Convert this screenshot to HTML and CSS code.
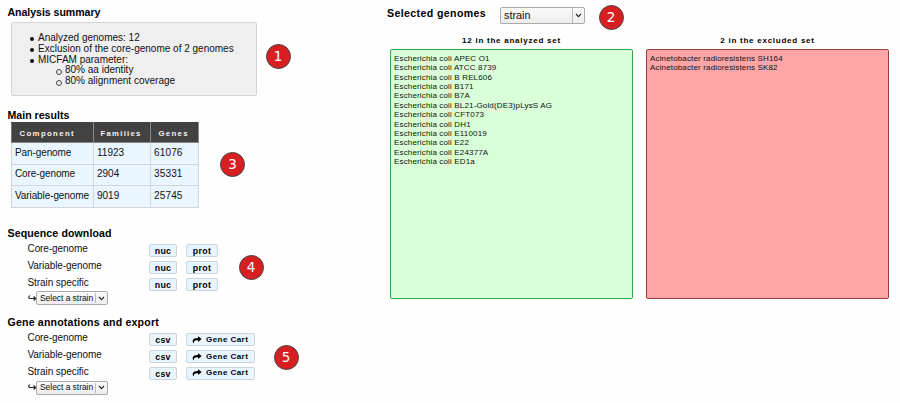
FILE: index.html
```html
<!DOCTYPE html>
<html lang="en">
<head>
<meta charset="utf-8">
<title>Pan-genome analysis</title>
<link rel="stylesheet" href="styles.css">
</head>
<body>
<svg class="defs" aria-hidden="true"><defs>
<symbol id="share" viewBox="0 0 10 8"><path d="M6 0.3 9.7 3.1 6 6V4.3C3.4 4 1.8 4.4 1.6 7.6 0 5.6 0 2 6 2z"/></symbol>
<symbol id="chevron" viewBox="0 0 7 5"><path d="M1 1 3.5 3.6 6 1"/></symbol>
<symbol id="hook" viewBox="0 0 9 7"><path d="M2.2 0.8C0.2 0.8 0.2 3.5 2.2 3.5H7.6M5.6 1.5 7.8 3.5 5.6 5.5"/></symbol>
</defs></svg>
<main class="page">
  <div class="left">
    <section class="summary">
      <h2 class="title t-summary">Analysis summary</h2>
      <div class="panel">
        <ul class="list">
          <li>Analyzed genomes: 12</li>
          <li>Exclusion of the core-genome of 2 genomes</li>
          <li>MICFAM parameter:
            <ul class="sublist"><li>80% aa identity</li><li>80% alignment coverage</li></ul>
          </li>
        </ul>
      </div>
      <span class="badge b1">1</span>
    </section>
    <section class="results">
      <h2 class="title t-results">Main results</h2>
      <table class="table">
        <thead><tr><th class="c1">Component</th><th class="c2">Families</th><th class="c3">Genes</th></tr></thead>
        <tbody>
          <tr><td>Pan-genome</td><td>11923</td><td>61076</td></tr>
          <tr><td>Core-genome</td><td>2904</td><td>35331</td></tr>
          <tr><td>Variable-genome</td><td>9019</td><td>25745</td></tr>
        </tbody>
      </table>
      <span class="badge b3">3</span>
    </section>
    <section class="download">
      <h2 class="title t-download">Sequence download</h2>
      <div class="row"><span class="label">Core-genome</span><a class="btn small">nuc</a><a class="btn prot">prot</a></div>
      <div class="row"><span class="label">Variable-genome</span><a class="btn small">nuc</a><a class="btn prot">prot</a></div>
      <div class="row"><span class="label">Strain specific</span><a class="btn small">nuc</a><a class="btn prot">prot</a></div>
      <div class="pick"><svg class="hook"><use href="#hook"/></svg><div class="select mini"><span class="value">Select a strain</span><span class="arrow"><svg class="chev"><use href="#chevron"/></svg></span></div></div>
      <span class="badge b4">4</span>
    </section>
    <section class="export">
      <h2 class="title t-export">Gene annotations and export</h2>
      <div class="row"><span class="label">Core-genome</span><a class="btn small">csv</a><a class="btn cart"><svg class="share"><use href="#share"/></svg>Gene Cart</a></div>
      <div class="row"><span class="label">Variable-genome</span><a class="btn small">csv</a><a class="btn cart"><svg class="share"><use href="#share"/></svg>Gene Cart</a></div>
      <div class="row"><span class="label">Strain specific</span><a class="btn small">csv</a><a class="btn cart"><svg class="share"><use href="#share"/></svg>Gene Cart</a></div>
      <div class="pick"><svg class="hook"><use href="#hook"/></svg><div class="select mini"><span class="value">Select a strain</span><span class="arrow"><svg class="chev"><use href="#chevron"/></svg></span></div></div>
      <span class="badge b5">5</span>
    </section>
  </div>
  <section class="right">
    <div class="bar">
      <h2 class="title t-selected">Selected genomes</h2>
      <div class="select big"><span class="value">strain</span><span class="arrow"><svg class="chev"><use href="#chevron"/></svg></span></div>
      <span class="badge b2">2</span>
    </div>
    <div class="sets">
      <div class="set">
        <h3 class="caption">12 in the analyzed set</h3>
        <div class="box analyzed">
          <div>Escherichia coli APEC O1</div><div>Escherichia coli ATCC 8739</div><div>Escherichia coli B REL606</div><div>Escherichia coli B171</div><div>Escherichia coli B7A</div><div>Escherichia coli BL21-Gold(DE3)pLysS AG</div><div>Escherichia coli CFT073</div><div>Escherichia coli DH1</div><div>Escherichia coli E110019</div><div>Escherichia coli E22</div><div>Escherichia coli E24377A</div><div>Escherichia coli ED1a</div>
        </div>
      </div>
      <div class="set">
        <h3 class="caption">2 in the excluded set</h3>
        <div class="box excluded"><div>Acinetobacter radioresistens SH164</div><div>Acinetobacter radioresistens SK82</div></div>
      </div>
    </div>
  </section>
</main>
</body>
</html>
```
FILE: styles.css
```css
* { box-sizing: border-box; }
body { margin: 0; background: #fefefe; color: #111; font: 10px/10.8px "Liberation Sans", Arial, sans-serif; }
.defs { position: absolute; width: 0; height: 0; }
.page { display: grid; grid-template-columns: 379px 1fr; height: 403px; overflow: hidden; white-space: nowrap; }
.left { padding: 6px 0 0 7.5px; }
.left section { position: relative; }
.title { margin: 0; font-size: 10.6px; line-height: 13px; font-weight: bold; color: #000; }
.t-summary { letter-spacing: -0.05px; }
.t-results { letter-spacing: 0; }
.t-download { letter-spacing: 0.1px; }
.t-export { letter-spacing: 0.18px; }
.summary { height: 103px; }
.panel { width: 246px; height: 74px; margin: 3px 0 0 3.5px; padding: 10px 0 0; background: #efefef; border: 1px solid #d4d4d4; border-radius: 2px; }
.list, .sublist { margin: 0; padding-left: 26px; }
.list li { position: relative; list-style: none; }
.list li::before { content: ""; position: absolute; left: -8px; top: 4px; width: 4px; height: 4px; border-radius: 50%; background: #111; }
.list .sublist li::before { background: none; border: 1px solid #444; left: -9px; top: 4px; }
.sublist { padding-left: 27px; }
.results { height: 118px; }
.table { margin-left: 3px; border-collapse: collapse; table-layout: fixed; width: 187px; background: #e9f5ff; }
.c1 { width: 82px; } .c2 { width: 57px; } .c3 { width: 48px; }
.table th { height: 20px; padding: 2px 0 0 8px; background: #424242; color: #f2f2f2; border: 1px solid #888; border-top-color: #424242; border-left-color: #777; font-size: 7.8px; line-height: 9px; letter-spacing: 1.35px; text-align: left; }
.table .c2 { padding-left: 7px; letter-spacing: 1.25px; }
.table .c3 { letter-spacing: 1.3px; }
.table td { height: 21.5px; padding: 0 0 0 3.5px; border: 1px solid #d2d4d6; font-size: 10px; letter-spacing: -0.1px; }
.table td + td { letter-spacing: 0; }
.table td:last-child { letter-spacing: 0.15px; }
.download { height: 89.3px; }
.row { display: flex; height: 16.8px; padding-left: 20px; }
.label { width: 121.5px; padding-top: 3px; line-height: 12px; letter-spacing: -0.08px; }
.btn { height: 13px; margin-top: 4px; border: 1px solid #ccd5dc; border-radius: 2px; background: #e9f5fe; color: #000; font-weight: bold; font-size: 8.8px; line-height: 12px; text-align: center; letter-spacing: 0.3px; }
.small { width: 28px; margin-right: 9px; }
.prot { width: 32px; }
.cart { display: flex; width: 69px; padding-left: 5px; align-items: center; font-size: 8px; letter-spacing: 0.45px; }
.share { width: 10px; height: 8px; margin-right: 4px; }
.pick { display: flex; padding-left: 20px; height: 16px; align-items: center; }
.hook { width: 9px; height: 7px; }
.hook, .chev { fill: none; stroke: #222; stroke-width: 1.1; }
.chev { width: 7px; height: 5px; }
.select { display: flex; align-items: center; border: 1px solid #aaa; border-radius: 2px; background: linear-gradient(#fafafa, #ededed); }
.value { flex: 1; }
.arrow { display: flex; align-items: center; justify-content: center; border-left: 1px solid #bbb; }
.mini { width: 72px; height: 14px; font-size: 8.5px; padding-left: 3px; letter-spacing: -0.05px; margin-left: -0.5px; }
.mini .arrow { width: 12px; height: 10px; }
.big { width: 85px; height: 17px; margin: 7px 0 0 14px; padding-left: 3px; font-size: 10.8px; }
.big .arrow { width: 12px; height: 15px; }
.right { padding-left: 8px; }
.bar { position: relative; display: flex; height: 35px; }
.t-selected { width: 99px; padding-top: 7px; letter-spacing: 0.38px; }
.sets { display: flex; gap: 13px; padding-left: 3px; }
.set { width: 243px; }
.caption { margin: 0 0 3px; font-size: 8px; line-height: 11px; letter-spacing: 0.75px; text-align: center; color: #000; }
.box { height: 249.5px; padding: 4px 0 0 3px; border: 1px solid; border-radius: 2px; font-size: 8px; line-height: 9.36px; letter-spacing: 0.15px; }
.analyzed { background: #d9ffd9; border-color: #3aa64c; }
.excluded { background: #ffa5a5; border-color: #a03c42; }
.badge { position: absolute; width: 25px; height: 25px; border: 1.5px solid #4a4444; border-radius: 50%; background: #d71f22; color: #fff; font: 13.5px/23px "DejaVu Sans", sans-serif; text-align: center; }
.b1 { left: 258px; top: 38px; }
.b2 { left: 211.5px; top: 5px; }
.b3 { left: 212.5px; top: 43px; }
.b4 { left: 231px; top: 28px; }
.b5 { left: 266px; top: 29px; }
```
